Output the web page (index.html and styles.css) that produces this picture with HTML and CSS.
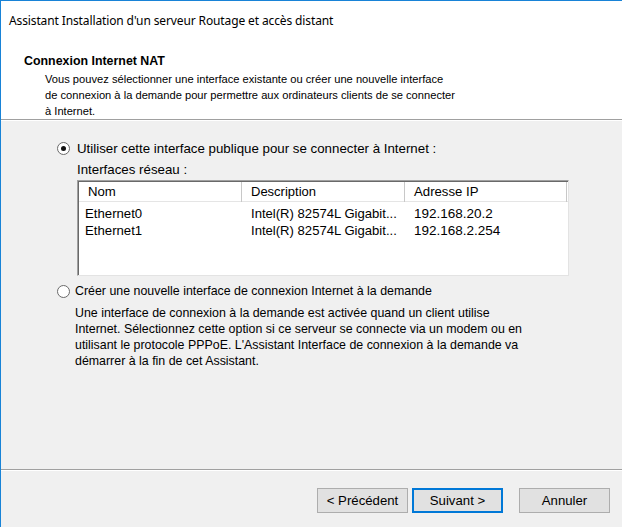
FILE: index.html
```html
<!DOCTYPE html>
<html lang="fr">
<head>
<meta charset="utf-8">
<title>Assistant Installation d'un serveur Routage et accès distant</title>
<link rel="stylesheet" href="styles.css">
</head>
<body>
<div class="window">
  <header class="header">
    <div class="title">Assistant Installation d'un serveur Routage et accès distant</div>
    <h1 class="heading">Connexion Internet NAT</h1>
    <p class="subtitle">Vous pouvez sélectionner une interface existante ou créer une nouvelle interface<br>de connexion à la demande pour permettre aux ordinateurs clients de se connecter<br>à Internet.</p>
  </header>
  <main class="body">
    <div class="option option-first">
      <span class="radio checked"></span>
      <span class="option-label label-first">Utiliser cette interface publique pour se connecter à Internet :</span>
    </div>
    <div class="option-content">
      <div class="list-label">Interfaces réseau :</div>
      <div class="listview">
        <div class="lv-row lv-header">
          <div class="col col-name">Nom</div>
          <div class="col col-desc">Description</div>
          <div class="col col-ip">Adresse IP</div>
        </div>
        <div class="lv-row lv-item">
          <div class="col col-name">Ethernet0</div>
          <div class="col col-desc">Intel(R) 82574L Gigabit...</div>
          <div class="col col-ip">192.168.20.2</div>
        </div>
        <div class="lv-row lv-item">
          <div class="col col-name">Ethernet1</div>
          <div class="col col-desc">Intel(R) 82574L Gigabit...</div>
          <div class="col col-ip">192.168.2.254</div>
        </div>
      </div>
    </div>
    <div class="option option-second">
      <span class="radio"></span>
      <span class="option-label label-second">Créer une nouvelle interface de connexion Internet à la demande</span>
    </div>
    <p class="option-desc">Une interface de connexion à la demande est activée quand un client utilise<br>Internet. Sélectionnez cette option si ce serveur se connecte via un modem ou en<br>utilisant le protocole PPPoE. L'Assistant Interface de connexion à la demande va<br>démarrer à la fin de cet Assistant.</p>
  </main>
  <footer class="footer">
    <button class="btn">&lt; Précédent</button>
    <button class="btn btn-default">Suivant &gt;</button>
    <button class="btn btn-cancel">Annuler</button>
  </footer>
</div>
</body>
</html>
```

FILE: styles.css
```css
* { box-sizing: border-box; }
html, body { margin: 0; padding: 0; background: #f0f0f0; }
body {
  font-family: "Liberation Sans", Arial, sans-serif;
  font-size: 11px;
  color: #000;
  width: 622px;
  height: 527px;
  overflow: hidden;
}
.window {
  width: 622px;
  height: 527px;
  border-top: 1px solid #1883d7;
  border-left: 1px solid #1883d7;
  display: flex;
  flex-direction: column;
}
.header {
  background: #fff;
  height: 119px;
  border-bottom: 1px solid #a0a0a0;
  box-shadow: 0 1px 0 #fff;
  padding: 12px 0 0 8px;
  flex: none;
}
.title {
  font-family: "Noto Sans", "Liberation Sans", sans-serif;
  font-size: 12px;
  line-height: 16px;
  letter-spacing: -0.12px;
}
.heading {
  margin: 24px 0 0 15px;
  font-size: 12.4px;
  font-weight: bold;
  line-height: 16px;
}
.subtitle {
  margin: 2px 0 0 36px;
  font-size: 11.15px;
  line-height: 16px;
  white-space: nowrap;
}
.body {
  flex: 1;
  padding: 19px 0 0 56px;
  margin-top: 1px;
}
.option {
  display: flex;
  align-items: center;
  height: 16px;
}
.radio {
  width: 13px;
  height: 13px;
  border-radius: 50%;
  border: 1px solid #6a6a6a;
  background: #fff;
  flex: none;
  position: relative;
}
.radio.checked::after {
  content: "";
  position: absolute;
  left: 3px;
  top: 3px;
  width: 5px;
  height: 5px;
  border-radius: 50%;
  background: #111;
}
.option-label { margin-left: 7px; white-space: nowrap; }
.label-first { font-size: 13.3px; }
.label-second { margin-left: 5px; font-size: 12.4px; }
.option-content { margin-left: 20px; }
.list-label { margin-top: 6px; line-height: 16px; font-size: 13.3px; }
.listview {
  margin-top: 2px;
  width: 492px;
  height: 96px;
  background: #fff;
  border-top: 1px solid #a0a0a0;
  border-left: 1px solid #a0a0a0;
  border-right: 1px solid #e3e3e3;
  border-bottom: 1px solid #e3e3e3;
  box-shadow: inset 1px 1px 0 #696969;
  padding: 1px 0 0 1px;
  font-size: 13.2px;
}
.lv-row { display: flex; }
.lv-header {
  height: 20px;
  align-items: center;
  border-bottom: 1px solid #e5e5e5;
}
.lv-header .col {
  border-right: 1px solid #c8c8c8;
  height: 20px;
  line-height: 20px;
  padding-left: 9px;
}
.lv-header .col-desc { font-size: 13px; }
.lv-item { height: 17px; line-height: 17px; }
.lv-header + .lv-item { margin-top: 3px; }
.lv-item .col { padding-left: 6px; }
.col { white-space: nowrap; overflow: hidden; }
.col-name { width: 163px; }
.col-desc { width: 163px; }
.col-ip { width: 162px; }
.lv-item .col-desc { padding-left: 9px; font-size: 13.1px; }
.lv-item .col-ip { padding-left: 9px; font-size: 13.5px; }
.option-second { margin-top: 7px; }
.option-desc {
  margin: 6px 0 0 18px;
  font-size: 12.4px;
  line-height: 16px;
  white-space: nowrap;
}
.footer {
  flex: none;
  height: 58px;
  border-top: 1px solid #a0a0a0;
  box-shadow: inset 0 1px 0 #fff;
  display: flex;
  justify-content: flex-end;
  align-items: flex-start;
  padding: 18px 12px 0 0;
  gap: 4px;
}
.btn {
  font-family: "Liberation Sans", Arial, sans-serif;
  font-size: 13.2px;
  width: 91px;
  height: 25px;
  background: #e1e1e1;
  border: 1px solid #adadad;
  color: #000;
  padding: 0;
  margin: 0;
}
.btn-default { border: 2px solid #0078d7; }
.btn-cancel { margin-left: 12px; }
```
